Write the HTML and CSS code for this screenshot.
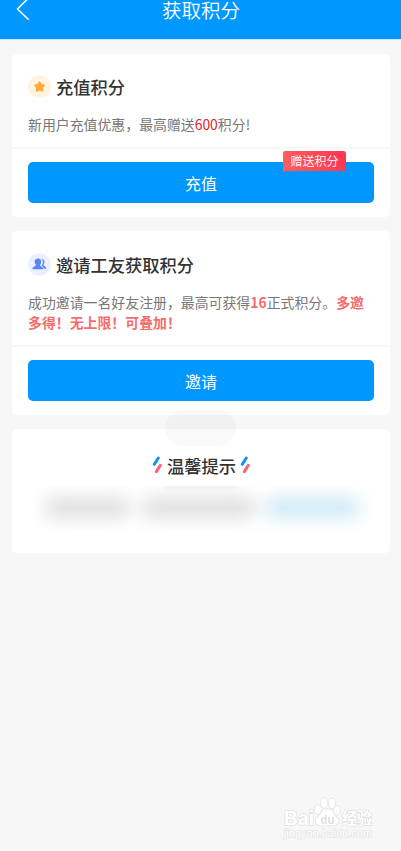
FILE: index.html
```html
<!DOCTYPE html>
<html lang="zh-CN">
<head>
<meta charset="utf-8">
<title>获取积分</title>
<link rel="stylesheet" href="styles.css">
</head>
<body>
<header class="navbar">
  <svg class="back" width="14" height="22" viewBox="0 0 14 22" fill="none" stroke="#fff" stroke-width="1.5"><path d="M12.800 -.2 1.500 11l11.300 10.800"/></svg>
  <h1 class="navbar-title">获取积分</h1>
</header>
<main class="content">
  <section class="card card-recharge">
    <div class="card-body">
      <h2 class="card-title">
        <svg class="icon" viewBox="0 0 23 23"><circle cx="11.500" cy="11.500" r="11.300" fill="#fff3e2"/><path d="m11.500 7.200 1.700 2.300 2.900.9-1.800 2.500v3l-2.800-.9-2.800.9v-3l-1.800-2.500 2.900-.9z" fill="#ffab3d" stroke="#ffab3d" stroke-width="1.600" stroke-linejoin="round"/></svg>
        <span>充值积分</span>
      </h2>
      <p class="desc">新用户充值优惠，最高赠送<span class="red">600</span>积分!</p>
    </div>
    <div class="card-action">
      <button class="btn">充值</button>
      <span class="tag">赠送积分</span>
    </div>
  </section>
  <section class="card">
    <div class="card-body">
      <h2 class="card-title">
        <svg class="icon" viewBox="0 0 23 23"><circle cx="11.500" cy="11.500" r="11.300" fill="#eaf0ff"/><path d="M13.600 6.300c3-.1 3.700 2.700 2 5.400 0 1.600 2.400 1.100 2.400 3.300v.8h-2.300c0-2.200-1.600-2.500-2.100-3.300 1.800-2 1.800-4.600 0-6.200z" fill="#5b86f7"/><path d="M10 5.600c2.300 0 3.400 1.500 3.200 3.500-.1 1.300-.6 2.100-1.200 2.800 0 1.700 3.100 1.100 3.100 3.900v.5H4.500v-.5c0-2.800 3.400-2.200 3.400-3.900C7.300 11.200 6.800 10.400 6.700 9.100 6.600 7.100 7.700 5.600 10 5.600z" fill="#5b86f7"/></svg>
        <span>邀请工友获取积分</span>
      </h2>
      <p class="desc">成功邀请一名好友注册，最高可获得<b>16</b>正式积分。<b>多邀多得！无上限！可叠加！</b></p>
    </div>
    <div class="card-action">
      <button class="btn">邀请</button>
    </div>
  </section>
  <section class="card tips">
    <h2 class="tips-title">
      <svg class="slashes" viewBox="0 0 10 18" fill="none" stroke-width="3" stroke-linecap="round"><path d="M6.300 2 2.300 8.300" stroke="#0b95f5"/><path d="M8.300 9.300 4.400 15.600" stroke="#fb6276"/></svg>
      <span class="tips-text">温馨提示</span>
      <svg class="slashes" viewBox="0 0 10 18" fill="none" stroke-width="3" stroke-linecap="round"><path d="M6.300 2 2.300 8.300" stroke="#0b95f5"/><path d="M8.300 9.300 4.400 15.600" stroke="#fb6276"/></svg>
    </h2>
    <div class="blurred"><i class="smudge smudge-a"></i><i class="smudge smudge-b"></i><i class="smudge smudge-c"></i><i class="smudge-top"></i></div>
  </section>
</main>
<div class="toast"></div>
<svg class="watermark" width="94" height="46" viewBox="0 0 94 46">
  <g fill="#fff" stroke="#e0e0e0" stroke-width="1.400" paint-order="stroke">
    <text class="wm-name" x="1" y="28" textLength="30" lengthAdjust="spacingAndGlyphs">Bai</text>
    <ellipse cx="35" cy="12.500" rx="3" ry="4.200"/><ellipse cx="41" cy="6" rx="3.200" ry="4.700"/><ellipse cx="49" cy="6.500" rx="3.200" ry="4.700"/><ellipse cx="54" cy="13.500" rx="3" ry="4.200"/>
    <path d="M44.500 12c5 0 6 5 9 8 4 4 1.500 8.500-3 8.500H38c-5 0-7-4.500-3-8.500 3-3 4.500-8 9.500-8z"/>
    <text class="wm-cn" x="59" y="27" textLength="30" lengthAdjust="spacingAndGlyphs">经验</text>
    <text class="wm-url" x="1" y="39.500" stroke="#e6e6e6" textLength="88" lengthAdjust="spacingAndGlyphs">jingyan.baidu.com</text>
  </g>
  <text class="wm-du" x="37.500" y="26.500" textLength="14" lengthAdjust="spacingAndGlyphs">du</text>
</svg>
</body>
</html>
```
FILE: styles.css
```css
* { box-sizing: border-box; margin: 0; padding: 0; }
body {
  min-height: 851px;
  background: #f7f7f7;
  font-family: "Noto Sans CJK SC", sans-serif;
  color: #333;
  overflow: hidden;
}
.navbar {
  display: grid;
  grid-template-columns: 1fr auto 1fr;
  align-items: start;
  height: 39px;
  padding: 0 15px 0 16px;
  background: #0098ff;
  box-shadow: 0 1px 0 #c9e8fd;
}
.back { margin-top: -2px; }
.navbar-title { font-size: 19.500px; font-weight: 350; line-height: 20px; color: #fff; }
.content {
  display: flex;
  flex-direction: column;
  gap: 14px;
  padding: 15px 11px 0 12px;
}
.card { background: #fff; border-radius: 5px; }
.card-body { padding: 19px 16px 13px; border-bottom: 2px solid #f7f7f7; }
.card-recharge .card-body { padding-top: 18px; }
.card-title {
  display: flex;
  align-items: center;
  gap: 5px;
  height: 28px;
  font-size: 17.250px;
  font-weight: 500;
}
.icon { width: 23px; height: 23px; }
.desc { margin-top: 14px; font-size: 13.900px; line-height: 20px; color: #777; }
.red { color: #e5212a; }
.desc b { color: #f56c6c; font-weight: 700; }
.card-action { position: relative; padding: 13px 16px 14px; }
.btn {
  display: block;
  width: 100%;
  height: 41px;
  padding-top: 1px;
  border: 0;
  border-radius: 5px;
  background: #0098ff;
  color: #fff;
  font: 400 16px/40px "Noto Sans CJK SC", sans-serif;
}
.tag {
  position: absolute;
  top: 2px;
  left: 271px;
  width: 63px;
  height: 20px;
  border-radius: 2px 3px 3px 0;
  background: linear-gradient(90deg, #ff5f5c, #fd3654);
  color: #fff;
  font-size: 12px;
  font-weight: 350;
  line-height: 20px;
  text-align: center;
}
.tag::after {
  content: "";
  position: absolute;
  top: 19px;
  left: 0;
  border-top: 3px solid #f0585f;
  border-right: 4px solid transparent;
}
.tips { height: 124px; padding: 22px 2px 0 8px; }
.tips-title {
  display: flex;
  justify-content: center;
  align-items: center;
  gap: 5px;
  height: 28px;
  padding-right: 6px;
  font-size: 17.250px;
  font-weight: 500;
}
.slashes { width: 10px; height: 18px; }
.tips-text { margin-right: -1px; }
.blurred { position: relative; height: 46px; margin-top: 7px; overflow: hidden; }
.smudge { position: absolute; top: 12px; height: 19px; border-radius: 8px; background: #dcdcdc; filter: blur(9px); }
.smudge-a { left: 25px; width: 84px; }
.smudge-b { left: 122px; width: 113px; }
.smudge-c { left: 245px; width: 95px; background: #cbe8f5; }
.smudge-top { position: absolute; top: -7px; left: 145px; width: 72px; height: 7px; background: #e0e0e0; filter: blur(4px); }
.toast {
  position: absolute;
  top: 410px;
  left: 165px;
  width: 71px;
  height: 36px;
  border-radius: 18px;
  background: rgba(0, 0, 0, .022);
}
.watermark { position: absolute; top: 797px; left: 283px; will-change: transform; }
.wm-name { font: 700 20px "Liberation Sans", sans-serif; }
.wm-cn { font: 700 16px "Noto Sans CJK SC", sans-serif; }
.wm-url { font: 400 10px "Liberation Sans", sans-serif; }
.wm-du { font: 700 13px "Liberation Sans", sans-serif; fill: #dedede; }
```
